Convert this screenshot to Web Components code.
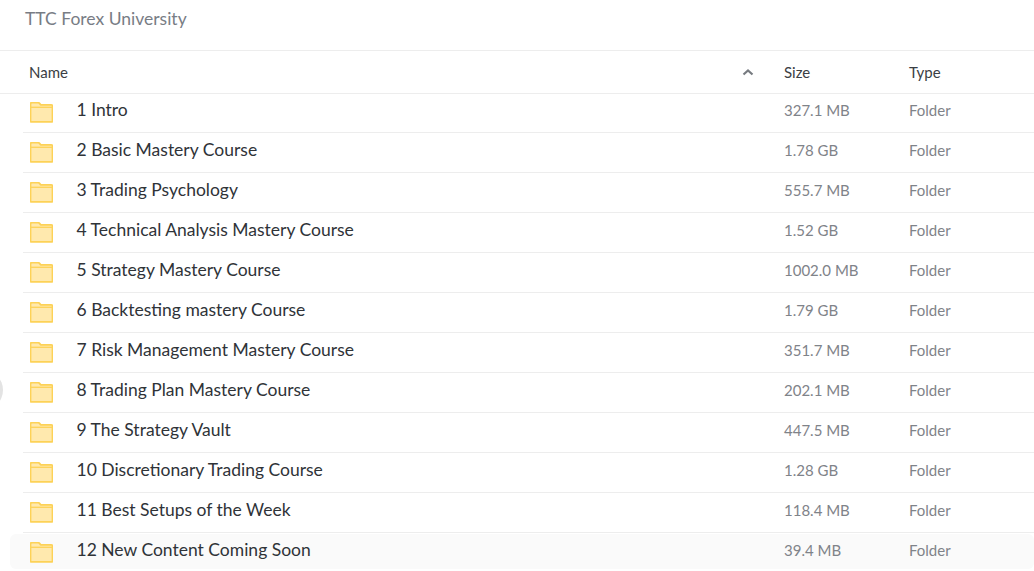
<!DOCTYPE html>
<html>
<head>
<meta charset="utf-8">
<title>TTC Forex University</title>
<style>
  html, body { margin: 0; height: 571px; overflow: hidden; background: #fff; }
  body { font-family: Lato, "Open Sans", sans-serif; }
</style>
</head>
<body>
<folder-page>
  <span slot="title">TTC Forex University</span>
  <file-row name="1 Intro" size="327.1 MB"></file-row>
  <file-row name="2 Basic Mastery Course" size="1.78 GB"></file-row>
  <file-row name="3 Trading Psychology" size="555.7 MB"></file-row>
  <file-row name="4 Technical Analysis Mastery Course" size="1.52 GB"></file-row>
  <file-row name="5 Strategy Mastery Course" size="1002.0 MB"></file-row>
  <file-row name="6 Backtesting mastery Course" size="1.79 GB"></file-row>
  <file-row name="7 Risk Management Mastery Course" size="351.7 MB"></file-row>
  <file-row name="8 Trading Plan Mastery Course" size="202.1 MB"></file-row>
  <file-row name="9 The Strategy Vault" size="447.5 MB"></file-row>
  <file-row name="10 Discretionary Trading Course" size="1.28 GB"></file-row>
  <file-row name="11 Best Setups of the Week" size="118.4 MB"></file-row>
  <file-row name="12 New Content Coming Soon" size="39.4 MB" hover></file-row>
</folder-page>

<script>
// Folder icon used in every row
class FolderIcon extends HTMLElement {
  constructor() {
    super();
    this.attachShadow({ mode: 'open' });
    this.shadowRoot.innerHTML = `
      <style>
        :host { display: block; width: 23px; height: 21px; }
        svg { display: block; }
      </style>
      <svg width="23" height="21" viewBox="0 0 23 21">
        <path d="M1 1.900A1.200 1.200 0 0 1 2.200.7h6.600c.4 0 .7.2 1 .5L11.300 2.900h10.500A1.200 1.200 0 0 1 23 4.100v14.900a.9.9 0 0 1-.9.9H1.900a.9.9 0 0 1-.9-.9z" transform="translate(-.5 0)" fill="#ffe9ae" stroke="#fdd257" stroke-width="1.800" stroke-linejoin="round"/>
        <path d="M1 5.300h21.500" stroke="#fdd257" stroke-width="1.300" fill="none"/>
      </svg>
    `;
  }
}
customElements.define('folder-icon', FolderIcon);

// One line of the listing
class FileRow extends HTMLElement {
  constructor() {
    super();
    this.attachShadow({ mode: 'open' });
    this.shadowRoot.innerHTML = `
      <style>
        :host { display: block; height: 40px; --shift: 0px; }
        :host([hover]) { height: 37px; --shift: 1px; }
        .line { height: 1px; margin-left: 23px; background: #ededed; }
        .cells {
          display: grid;
          grid-template-columns: 46.5px 707.5px 125px 1fr;
          align-items: start;
          height: 39px;
          padding-left: 30px;
          box-sizing: border-box;
        }
        :host([hover]) .cells {
          height: 35px;
          margin: 1px 0 0 10px;
          padding-left: 20px;
          background: #fafafa;
          border-radius: 6px;
        }
        folder-icon { margin-top: calc(9px - var(--shift)); }
        .name { margin-top: calc(6px - var(--shift)); font-size: 17.5px; line-height: 22px; color: #2f3338; white-space: nowrap; }
        .meta { margin-top: calc(6px - var(--shift)); font-size: 15px; line-height: 22px; color: #7f8389; white-space: nowrap; }
      </style>
      <div class="cells">
        <folder-icon></folder-icon>
        <div class="name"></div>
        <div class="meta size"></div>
        <div class="meta">Folder</div>
      </div>
      <div class="line"></div>
    `;
  }
  connectedCallback() {
    this.shadowRoot.querySelector('.name').textContent = this.getAttribute('name');
    this.shadowRoot.querySelector('.size').textContent = this.getAttribute('size');
    if (this.hasAttribute('hover')) this.shadowRoot.querySelector('.line').remove();
  }
}
customElements.define('file-row', FileRow);

// Title, column headers and the list
class FolderPage extends HTMLElement {
  constructor() {
    super();
    this.attachShadow({ mode: 'open' });
    this.shadowRoot.innerHTML = `
      <style>
        :host { display: block; position: relative; height: 571px; overflow: hidden; }
        .title {
          height: 42px;
          padding: 8px 0 0 25px;
          font-size: 17.5px;
          line-height: 22px;
          color: #787d85;
          border-bottom: 1px solid #ededed;
        }
        .head {
          display: grid;
          grid-template-columns: 713px 42px 125px 1fr;
          align-items: center;
          height: 42px;
          margin-bottom: -1px;
          padding-left: 29px;
          border-bottom: 1px solid #ededed;
          font-size: 15px;
          color: #3a3e44;
        }
        .head svg { display: block; }
        .edge {
          position: absolute;
          left: -37px;
          top: 370px;
          width: 40px;
          height: 40px;
          border-radius: 50%;
          background: #e3e3e3;
        }
      </style>
      <div class="title"><slot name="title"></slot></div>
      <div class="head">
        <div>Name</div>
        <svg width="12" height="8" viewBox="0 0 12 8"><path d="M1.500 6.500 6 2.500l4.500 4" fill="none" stroke="#777b80" stroke-width="2.200"/></svg>
        <div>Size</div>
        <div>Type</div>
      </div>
      <slot></slot>
      <div class="edge"></div>
    `;
  }
}
customElements.define('folder-page', FolderPage);
</script>
</body>
</html>
